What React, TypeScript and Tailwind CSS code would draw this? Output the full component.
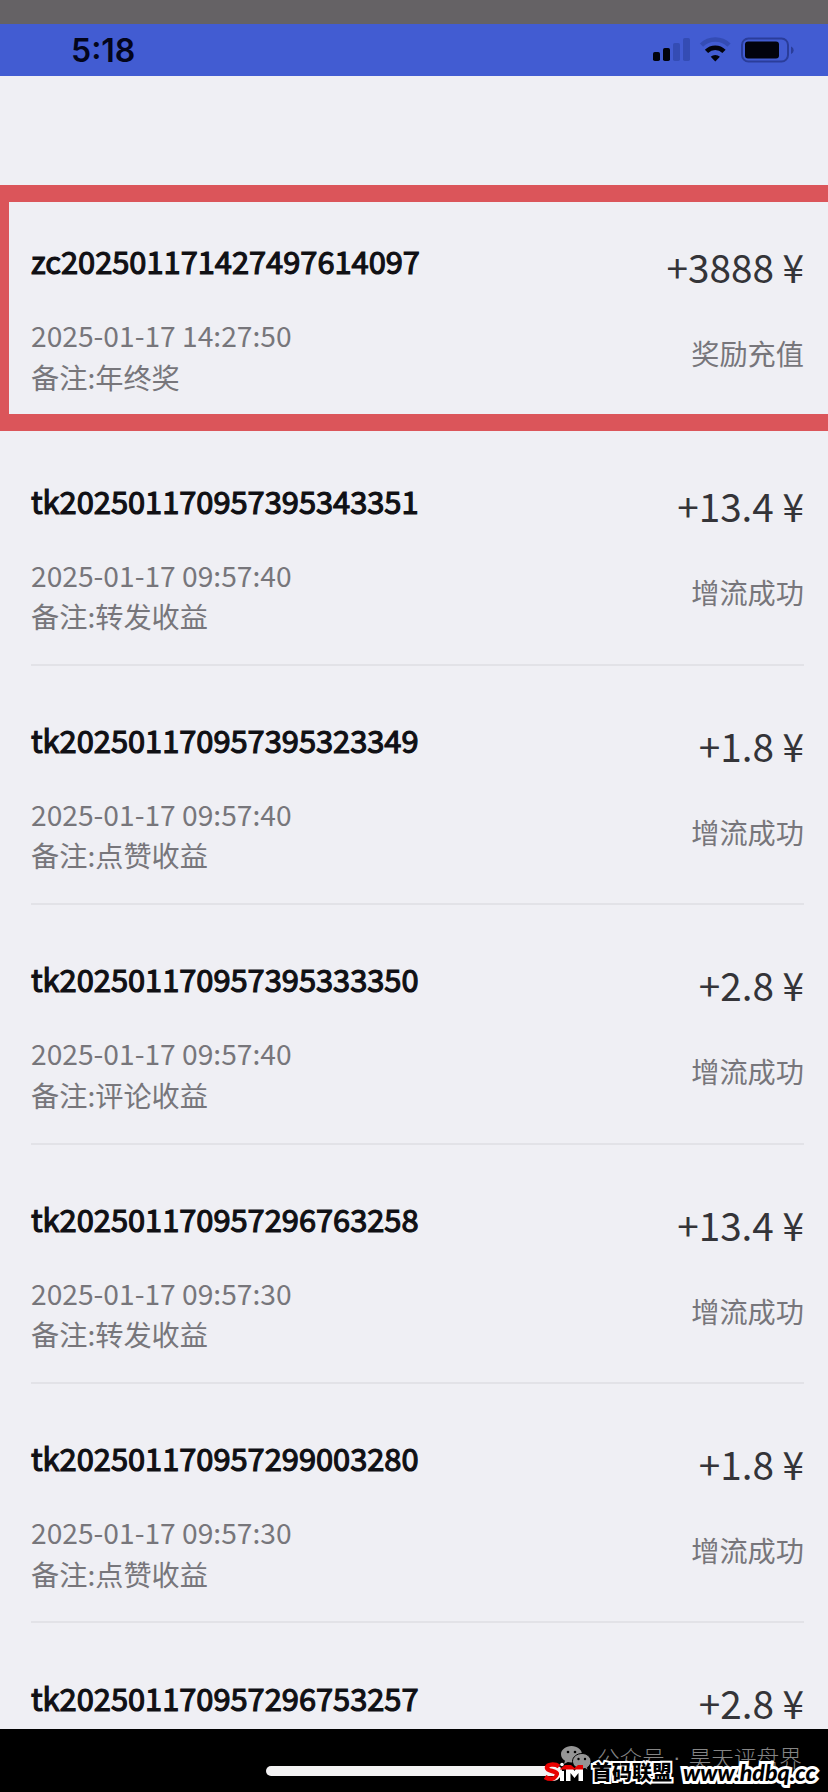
type RecordItem = {
  id: string;
  amount: string;
  time?: string;
  remark?: string;
  status?: string;
};

const RECORDS: RecordItem[] = [
  { id: "zc202501171427497614097", time: "2025-01-17 14:27:50", remark: "年终奖", amount: "+3888", status: "奖励充值" },
  { id: "tk202501170957395343351", time: "2025-01-17 09:57:40", remark: "转发收益", amount: "+13.4", status: "增流成功" },
  { id: "tk202501170957395323349", time: "2025-01-17 09:57:40", remark: "点赞收益", amount: "+1.8", status: "增流成功" },
  { id: "tk202501170957395333350", time: "2025-01-17 09:57:40", remark: "评论收益", amount: "+2.8", status: "增流成功" },
  { id: "tk202501170957296763258", time: "2025-01-17 09:57:30", remark: "转发收益", amount: "+13.4", status: "增流成功" },
  { id: "tk202501170957299003280", time: "2025-01-17 09:57:30", remark: "点赞收益", amount: "+1.8", status: "增流成功" },
  { id: "tk202501170957296753257", amount: "+2.8" },
];

export default function App() {
  return (
    <div className="flex h-[1792px] w-[828px] flex-col overflow-hidden bg-[#efeff4] font-['Noto_Sans_CJK_SC',sans-serif]">
      <div className="h-6 shrink-0 bg-[#656265]" />
      <StatusBar />
      <main className="relative min-h-0 flex-1 overflow-hidden pt-[111px]">
        {RECORDS.map((r) => (
          <RecordRow key={r.id} record={r} />
        ))}
        {/* Highlight around the first record */}
        <div className="absolute top-[109px] -right-5 left-0 h-[246px] border-y-[17px] border-l-[9px] border-[#db555a]" />
      </main>
      <BottomBar />
    </div>
  );
}

function StatusBar() {
  return (
    <header className="flex h-[52px] shrink-0 items-center justify-between bg-[#425cd2] pr-[34px] pl-[71px]">
      <span className="pt-px font-['Inter',sans-serif] text-[32px] leading-none font-semibold text-[#03051c]">5:18</span>
      <svg width="142" height="26" viewBox="0 0 142 26">
        <g fill="#02030d">
          <rect x="1" y="15" width="7" height="9" rx="1.8" />
          <rect x="11" y="11" width="7" height="13" rx="1.8" />
          <rect x="21" y="6" width="7" height="18" rx="1.8" fill="#344cb4" />
          <rect x="31" y="1" width="7" height="23" rx="1.8" fill="#344cb4" />
        </g>
        <g fill="none" strokeWidth="4.6">
          <path d="M49.5 8.2a19.5 19.5 0 0 1 27.5 0" stroke="#344cb4" />
          <path d="M54.5 14.3a12.5 12.5 0 0 1 17.5 0" stroke="#02030d" />
        </g>
        <path d="M63.3 24.5l-4.6-4.7a6.5 6.5 0 0 1 9.2 0z" fill="#02030d" />
        <rect x="90" y="1.5" width="46" height="23" rx="6.5" fill="none" stroke="#2a3d9a" strokeWidth="2" />
        <rect x="93" y="4.5" width="34" height="17" rx="3" fill="#02030d" />
        <path d="M139 9.5c3.5 1.5 3.5 6 0 7.5z" fill="#2a3d9a" />
      </svg>
    </header>
  );
}

function RecordRow({ record }: { record: RecordItem }) {
  return (
    <section className="mr-6 ml-[31px] flex h-[239.4px] justify-between border-b-2 border-[#e2e2e7]">
      <div className="pt-[52.2px]">
        <h2 className="text-[30.8px] leading-[44px] font-normal text-[#101014] [-webkit-text-stroke:1.2px_#101014]">
          {record.id}
        </h2>
        {record.time && (
          <div className="mt-[31px] text-[28.2px] leading-[41.5px] text-[#77767b]">
            <p>{record.time}</p>
            <p>备注:{record.remark}</p>
          </div>
        )}
      </div>
      <div className="pt-[51px] text-right">
        <p className="text-[38.7px] leading-[56px] text-[#343438]">{record.amount} ¥</p>
        {record.status && (
          <p className="mt-[38px] text-[28.2px] leading-[41px] text-[#77767b]">{record.status}</p>
        )}
      </div>
    </section>
  );
}

function BottomBar() {
  return (
    <footer className="relative h-[63px] shrink-0 bg-black pt-[37px]">
      <div className="mx-auto h-[10px] w-[296px] rounded-full bg-[#f3f2f3]" />
      {/* Account watermark */}
      <div className="absolute top-[13px] left-[561px] flex text-[#858585]">
        <WeChatIcon />
        <span className="ml-[5px] flex text-[22.6px] leading-[32px] font-light">
          公众号
          <span className="w-6 text-center font-['Liberation_Sans',sans-serif]">·</span>
          昊天评盘界
        </span>
      </div>
      {/* Site watermark */}
      <div className="absolute top-[27px] left-[543px] flex items-center">
        <SmLogo />
        <span className="ml-[9px] text-[20px] leading-8 font-black text-black [paint-order:stroke_fill] [-webkit-text-stroke:4px_white]">
          首码联盟
        </span>
        <span className="ml-[11px] font-['Lato',sans-serif] text-[23.2px] leading-8 font-black text-black italic [paint-order:stroke_fill] [-webkit-text-stroke:6px_white]">
          www.hdbq.cc
        </span>
      </div>
    </footer>
  );
}

function WeChatIcon() {
  return (
    <svg width="31" height="28" viewBox="0 0 31 28" className="mt-[3px]">
      <path d="M10.5 1C4.7 1 0 4.7 0 9.3c0 2.7 1.5 5 4 6.5l-1 3.2 3.8-2c1.2.3 2.4.5 3.7.5 5.8 0 10.5-3.7 10.5-8.2S16.3 1 10.5 1z" fill="#959595" />
      <path d="M21 8.500c-5 0-9.500 3.400-9.500 7.800s4.200 7.700 9.300 7.700c1 0 2.200-.2 3.200-.5l3.200 1.800-.8-2.800c2.200-1.500 3.600-3.700 3.600-6.200 0-4.400-4-7.800-9-7.800z" fill="#959595" stroke="#000" />
      <g fill="#000">
        <circle cx="7" cy="7" r="1.3" />
        <circle cx="14" cy="7" r="1.3" />
        <circle cx="17.5" cy="14" r="1.2" />
        <circle cx="24" cy="14" r="1.2" />
      </g>
    </svg>
  );
}

function SmLogo() {
  return (
    <svg width="40" height="20" viewBox="0 0 40 20">
      <path d="M16 4.5C12 1.5 3.5 2 4 6s11 2 10 7-8 4.5-12 2" fill="none" stroke="#e80000" strokeWidth="4.5" />
      <path d="M9 19c4-1 7-4 8-10h4v10h-4v-4c-2 3-4 4-8 4z" fill="#fff" />
      <circle cx="19" cy="2.5" r="1.8" fill="#fff" />
      <path d="M23 19V4h5l3.5 5L35 4h5v15h-4.5v-8l-4 5-4-5v8z" fill="#fff" />
      <path d="M17 7l5-4h6l3.5 3L35 3h5v4.500H17z" fill="#e80000" />
    </svg>
  );
}
